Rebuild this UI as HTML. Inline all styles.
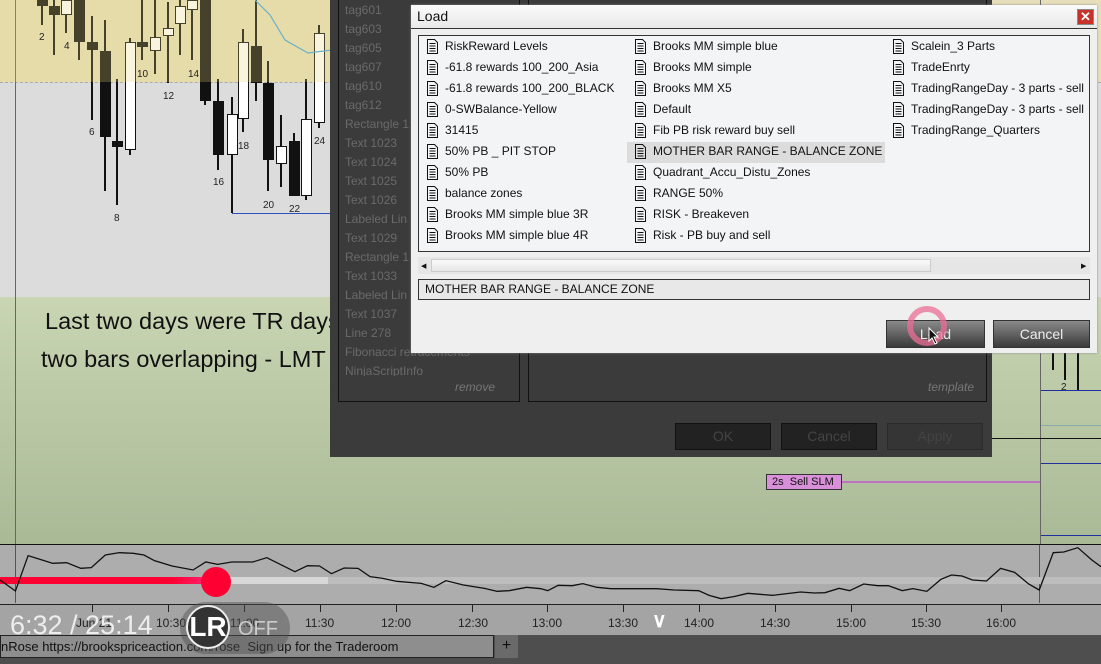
<!DOCTYPE html>
<html><head><meta charset="utf-8"><style>
*{margin:0;padding:0;box-sizing:border-box}
body{width:1101px;height:664px;overflow:hidden;position:relative;font-family:"Liberation Sans",sans-serif;background:#b0bf9c}
.a{position:absolute}
.w{position:absolute;width:2px;background:#111}
.b{position:absolute;width:11px;border:1px solid #111}
.k{background:#111}.h{background:#fff}
.lbl{position:absolute;font-size:10px;color:#222}
.dl{position:absolute;font-size:12px;color:#6a6a6a;left:345px}
.it{position:absolute;font-size:12px;color:#111;white-space:nowrap;height:21px;line-height:21px}
.it svg{position:absolute;left:-18px;top:3px}
.tm{position:absolute;top:616px;font-size:12px;color:#222}
.tk{position:absolute;top:604px;width:1px;height:8px;background:#222}
</style></head><body>
<div class="a" style="left:0;top:0;width:1101px;height:82px;background:#e6dfba"></div>
<div class="a" style="left:0;top:82px;width:1101px;height:215px;background:#dcdcdc;border-top:1px dashed #aaa"></div>
<div class="a" style="left:0;top:297px;width:1101px;height:248px;background:linear-gradient(#c9d5b3,#a9b996)"></div>
<div class="a" style="left:15px;top:0;width:1px;height:604px;background:#666"></div>
<div class="a" style="left:1040px;top:0;width:1px;height:604px;background:#666"></div>
<div class="w" style="left:41px;top:0;height:25px"></div><div class="b k" style="left:37px;top:0;height:6px"></div>
<div class="w" style="left:53px;top:0;height:55px"></div><div class="b k" style="left:49px;top:6px;height:9px"></div>
<div class="w" style="left:65px;top:0;height:33px"></div><div class="b h" style="left:61px;top:0;height:15px"></div>
<div class="w" style="left:78px;top:0;height:60px"></div><div class="b k" style="left:74px;top:0;height:42px"></div>
<div class="w" style="left:91px;top:16px;height:104px"></div><div class="b k" style="left:87px;top:42px;height:8px"></div>
<div class="w" style="left:104px;top:20px;height:171px"></div><div class="b k" style="left:100px;top:51px;height:86px"></div>
<div class="w" style="left:116px;top:79px;height:126px"></div><div class="b k" style="left:112px;top:141px;height:6px"></div>
<div class="w" style="left:129px;top:38px;height:117px"></div><div class="b h" style="left:125px;top:42px;height:108px"></div>
<div class="w" style="left:141px;top:0;height:60px"></div><div class="b k" style="left:137px;top:42px;height:5px"></div>
<div class="w" style="left:154px;top:0;height:74px"></div><div class="b h" style="left:150px;top:37px;height:14px"></div>
<div class="w" style="left:167px;top:2px;height:81px"></div><div class="b h" style="left:163px;top:28px;height:8px"></div>
<div class="w" style="left:179px;top:0;height:55px"></div><div class="b h" style="left:175px;top:6px;height:18px"></div>
<div class="w" style="left:191px;top:0;height:60px"></div><div class="b h" style="left:187px;top:0;height:10px"></div>
<div class="w" style="left:204px;top:0;height:105px"></div><div class="b k" style="left:200px;top:0;height:101px"></div>
<div class="w" style="left:217px;top:79px;height:91px"></div><div class="b k" style="left:213px;top:101px;height:54px"></div>
<div class="w" style="left:231px;top:97px;height:116px"></div><div class="b h" style="left:227px;top:114px;height:41px"></div>
<div class="w" style="left:242px;top:29px;height:103px"></div><div class="b h" style="left:238px;top:42px;height:77px"></div>
<div class="w" style="left:255px;top:0;height:101px"></div><div class="b k" style="left:251px;top:46px;height:37px"></div>
<div class="w" style="left:267px;top:61px;height:130px"></div><div class="b k" style="left:263px;top:83px;height:77px"></div>
<div class="w" style="left:280px;top:115px;height:72px"></div><div class="b h" style="left:276px;top:146px;height:18px"></div>
<div class="w" style="left:293px;top:133px;height:63px"></div><div class="b k" style="left:289px;top:141px;height:55px"></div>
<div class="w" style="left:305px;top:79px;height:121px"></div><div class="b h" style="left:301px;top:119px;height:77px"></div>
<div class="w" style="left:318px;top:25px;height:103px"></div><div class="b h" style="left:314px;top:33px;height:90px"></div>
<div class="a" style="left:0;top:0;width:330px;height:82px;background:rgba(230,210,120,.25)"></div>
<div class="a" style="left:232px;top:213px;width:100px;height:1px;background:#3050c0"></div>
<svg class="a" style="left:240px;top:0" width="92" height="60"><path d="M15 0 L30 15 L45 40 L68 53 L92 50" stroke="#6ab0c8" fill="none" stroke-width="1.2"/></svg>
<div class="lbl" style="left:39px;top:32px">2</div><div class="lbl" style="left:64px;top:41px">4</div>
<div class="lbl" style="left:89px;top:127px">6</div><div class="lbl" style="left:114px;top:213px">8</div>
<div class="lbl" style="left:137px;top:69px">10</div><div class="lbl" style="left:163px;top:91px">12</div>
<div class="lbl" style="left:188px;top:69px">14</div><div class="lbl" style="left:213px;top:177px">16</div>
<div class="lbl" style="left:238px;top:141px">18</div><div class="lbl" style="left:263px;top:200px">20</div>
<div class="lbl" style="left:289px;top:204px">22</div><div class="lbl" style="left:314px;top:136px">24</div>
<div class="a" style="left:45px;top:308px;font-size:23.5px;color:#111;white-space:nowrap">Last two days were TR days</div>
<div class="a" style="left:41px;top:346px;font-size:23.5px;color:#111;white-space:nowrap">two bars overlapping - LMT</div>
<div class="a" style="left:1041px;top:390px;width:60px;height:1px;background:#2030a0"></div>
<div class="a" style="left:1041px;top:425px;width:60px;height:1px;background:#8aa"></div>
<div class="a" style="left:1041px;top:463px;width:60px;height:1px;background:#2030a0"></div>
<div class="a" style="left:1041px;top:535px;width:60px;height:1px;background:#2030a0"></div>
<div class="a" style="left:990px;top:438px;width:111px;height:1px;background:#111"></div>
<div class="w" style="left:1052px;top:352px;height:18px"></div><div class="w" style="left:1064px;top:352px;height:28px"></div>
<div class="w" style="left:1077px;top:352px;height:38px"></div>
<div class="lbl" style="left:1061px;top:382px">2</div>
<div class="a" style="left:766px;top:474px;width:76px;height:16px;background:#d890d8;border:1px solid #333;font-size:11px;line-height:14px;padding-left:5px;color:#111">2s&nbsp; Sell SLM</div>
<div class="a" style="left:842px;top:481px;width:198px;height:2px;background:#c070c0"></div>
<div class="a" style="left:330px;top:0;width:662px;height:457px;background:#3b3b3b"></div>
<div class="a" style="left:338px;top:-2px;width:182px;height:404px;border:1px solid #111"></div>
<div class="a" style="left:528px;top:-2px;width:459px;height:404px;border:1px solid #111"></div>
<div class="dl" style="top:3px">tag601</div><div class="dl" style="top:22px">tag603</div><div class="dl" style="top:41px">tag605</div>
<div class="dl" style="top:60px">tag607</div><div class="dl" style="top:79px">tag610</div><div class="dl" style="top:98px">tag612</div>
<div class="dl" style="top:117px">Rectangle 1</div><div class="dl" style="top:136px">Text 1023</div><div class="dl" style="top:155px">Text 1024</div>
<div class="dl" style="top:174px">Text 1025</div><div class="dl" style="top:193px">Text 1026</div><div class="dl" style="top:212px">Labeled Lin</div>
<div class="dl" style="top:231px">Text 1029</div><div class="dl" style="top:250px">Rectangle 1</div><div class="dl" style="top:269px">Text 1033</div>
<div class="dl" style="top:288px">Labeled Lin</div><div class="dl" style="top:307px">Text 1037</div><div class="dl" style="top:326px">Line 278</div>
<div class="dl" style="top:345px">Fibonacci retracements</div><div class="dl" style="top:364px;height:12px;overflow:hidden">NinjaScriptInfo</div>
<div class="a" style="left:455px;top:380px;font-size:12px;font-style:italic;color:#777">remove</div>
<div class="a" style="left:928px;top:380px;font-size:12px;font-style:italic;color:#777">template</div>
<div class="a" style="left:675px;top:423px;width:96px;height:27px;background:#222;border:1px solid #111;color:#444;font-size:14px;text-align:center;line-height:25px">OK</div>
<div class="a" style="left:781px;top:423px;width:96px;height:27px;background:#222;border:1px solid #111;color:#444;font-size:14px;text-align:center;line-height:25px">Cancel</div>
<div class="a" style="left:887px;top:423px;width:96px;height:27px;background:#353535;border:1px solid #2a2a2a;color:#444;font-size:14px;text-align:center;line-height:25px">Apply</div>
<div class="a" style="left:411px;top:5px;width:686px;height:348px;background:#efefef;box-shadow:0 0 2px #888"></div>
<div class="a" style="left:411px;top:5px;width:686px;height:24px;background:linear-gradient(#fbfbfb,#e8e8e8);border-bottom:1px solid #333;font-size:14px;padding:3px 0 0 6px;color:#111">Load</div>
<div class="a" style="left:1077px;top:9px;width:17px;height:16px;background:#c8322a;border:1px solid #888;color:#fff;font-size:13px;font-weight:bold;text-align:center;line-height:14px">✕</div>
<div class="a" style="left:418px;top:35px;width:672px;height:217px;background:#f3f4f6;border:1px solid #333"></div>
<div class="a" style="left:627px;top:142px;width:258px;height:21px;background:#dcdcdc"></div>
<svg width="0" height="0" style="position:absolute"><defs><symbol id="d" viewBox="0 0 11 15"><path d="M0.5 0.5H7.5L10.5 3.5V14.5H0.5Z M2.5 4.5H8.5 M2.5 7H8.5 M2.5 9.5H8.5 M2.5 12H8.5" fill="none" stroke="#111" stroke-width="1"/></symbol></defs></svg>
<div id="list"></div>
<div class="a" style="left:418px;top:257px;width:672px;height:17px;background:#e6e6e6"></div>
<div class="a" style="left:421px;top:262px;font-size:7px;color:#111">◀</div>
<div class="a" style="left:1081px;top:262px;font-size:7px;color:#111">▶</div>
<div class="a" style="left:431px;top:259px;width:500px;height:13px;background:linear-gradient(#fafafa,#e6e6e6);border:1px solid #ccc"></div>
<div class="a" style="left:418px;top:279px;width:672px;height:21px;background:#e8e8e8;border:1px solid #333;font-size:12px;line-height:19px;padding-left:6px;color:#111">MOTHER BAR RANGE - BALANCE ZONE</div>
<div class="a" style="left:886px;top:320px;width:99px;height:28px;background:linear-gradient(#8a8a8a,#3a3a3a);border:1px solid #333;color:#eee;font-size:14px;text-align:center;line-height:26px">Load</div>
<div class="a" style="left:993px;top:320px;width:97px;height:28px;background:linear-gradient(#8a8a8a,#3a3a3a);border:1px solid #333;color:#eee;font-size:14px;text-align:center;line-height:26px">Cancel</div>
<div class="a" style="left:907px;top:306px;width:40px;height:40px;border-radius:50%;border:6px solid rgba(235,110,150,.75)"></div>
<svg class="a" style="left:928px;top:327px" width="12" height="18"><path d="M1 1V14L4 11L7 17L9 16L6 10H10Z" fill="#111" stroke="#fff" stroke-width="1"/></svg>
<div class="a" style="left:0;top:544px;width:1101px;height:1px;background:#111"></div>
<div class="a" style="left:0;top:545px;width:1101px;height:59px;background:#adadad"></div>
<div class="a" style="left:0;top:604px;width:1101px;height:1px;background:#222"></div>
<div class="a" style="left:0;top:605px;width:1101px;height:30px;background:#a4a4a4"></div>
<div class="a" style="left:15px;top:545px;width:1px;height:58px;background:#555"></div>
<div class="a" style="left:1039px;top:545px;width:1px;height:58px;background:#555"></div>
<div class="a" style="left:0;top:577px;width:1101px;height:7px;background:#bdbdbd"></div>
<div class="a" style="left:215px;top:577px;width:113px;height:7px;background:#d8d8d8"></div>
<div class="a" style="left:0;top:577px;width:215px;height:7px;background:linear-gradient(90deg,#ff0033 80%,#ff2a77)"></div>
<div class="a" style="left:201px;top:567px;width:30px;height:30px;border-radius:50%;background:#ff0033"></div>
<svg class="a" style="left:0;top:440px" width="1101" height="224" viewBox="0 0 1568 672" preserveAspectRatio="none"><polyline vector-effect="non-scaling-stroke" fill="none" stroke="#111" stroke-width="1.3" points="0,420 22,453 40,347 60,360 75,370 95,368 115,385 130,383 150,345 170,338 190,340 205,345 220,362 245,378 275,390 293,366 310,373 330,366 360,366 380,353 400,374 420,395 438,377 455,378 472,401 490,384 510,385 527,410 545,415 565,424 600,430 618,442 635,422 660,435 690,445 708,454 725,452 750,442 770,446 780,452 795,436 815,437 830,431 850,442 870,446 935,446 960,450 995,452 1010,466 1027,476 1045,470 1065,460 1100,466 1140,456 1160,459 1175,458 1195,445 1210,452 1230,432 1250,437 1265,437 1285,452 1300,446 1320,454 1340,418 1355,405 1370,408 1385,420 1405,423 1425,385 1445,397 1465,432 1480,450 1500,338 1515,336 1535,323 1555,360 1568,380"/></svg>
<div class="tk" style="left:92px"></div><div class="tk" style="left:168px"></div><div class="tk" style="left:244px"></div>
<div class="tk" style="left:320px"></div><div class="tk" style="left:396px"></div><div class="tk" style="left:472px"></div><div class="tk" style="left:547px"></div>
<div class="tk" style="left:623px"></div><div class="tk" style="left:699px"></div><div class="tk" style="left:775px"></div><div class="tk" style="left:851px"></div>
<div class="tk" style="left:926px"></div><div class="tk" style="left:1001px"></div>
<div class="tm" style="left:76px">Jun 21</div><div class="tm" style="left:156px">10:30</div><div class="tm" style="left:230px">11:00</div>
<div class="tm" style="left:305px">11:30</div><div class="tm" style="left:381px">12:00</div><div class="tm" style="left:458px">12:30</div>
<div class="tm" style="left:532px">13:00</div><div class="tm" style="left:608px">13:30</div><div class="tm" style="left:684px">14:00</div>
<div class="tm" style="left:760px">14:30</div><div class="tm" style="left:836px">15:00</div><div class="tm" style="left:911px">15:30</div>
<div class="tm" style="left:986px">16:00</div>
<div class="a" style="left:652px;top:608px;font-size:20px;color:#fff;font-weight:bold">∨</div>
<div class="a" style="left:0;top:635px;width:1101px;height:29px;background:#4e4e4e"></div>
<div class="a" style="left:0;top:635px;width:494px;height:23px;background:#8e8e8e;border:1px solid #222;font-size:13px;line-height:21px;color:#111;white-space:nowrap;overflow:hidden">nRose https://brookspriceaction.com/rose&nbsp; Sign up for the Traderoom</div>
<div class="a" style="left:495px;top:635px;width:23px;height:23px;background:#6a6a6a;color:#111;font-size:16px;text-align:center;line-height:22px">+</div>
<div class="a" style="left:180px;top:602px;width:110px;height:52px;border-radius:26px;background:rgba(80,80,80,.45)"></div>
<div class="a" style="left:10px;top:610px;font-size:27px;color:#eee;white-space:nowrap">6:32 / 25:14</div>
<div class="a" style="left:186px;top:605px;width:44px;height:44px;border-radius:50%;background:#333;border:2px solid #eee;color:#fff;font-size:28px;font-weight:bold;text-align:center;line-height:40px">LR</div>
<div class="a" style="left:238px;top:618px;font-size:20px;color:#ccc">OFF</div>
<script>
var c=[[445,["RiskReward Levels","-61.8 rewards 100_200_Asia","-61.8 rewards 100_200_BLACK","0-SWBalance-Yellow","31415","50% PB _ PIT STOP","50% PB","balance zones","Brooks MM simple blue 3R","Brooks MM simple blue 4R"]],[653,["Brooks MM simple blue","Brooks MM simple","Brooks MM X5","Default","Fib PB risk reward buy sell","MOTHER BAR RANGE - BALANCE ZONE","Quadrant_Accu_Distu_Zones","RANGE 50%","RISK - Breakeven","Risk - PB buy and sell"]],[911,["Scalein_3 Parts","TradeEnrty","TradingRangeDay - 3 parts - sell","TradingRangeDay - 3 parts - sell","TradingRange_Quarters"]]];
var h="";c.forEach(function(col){col[1].forEach(function(t,i){h+='<div class="it" style="left:'+col[0]+'px;top:'+(36+i*21)+'px"><svg width="11" height="15"><use href="#d"/></svg>'+t+'</div>';});});
document.getElementById("list").outerHTML=h;
</script>
</body></html>
